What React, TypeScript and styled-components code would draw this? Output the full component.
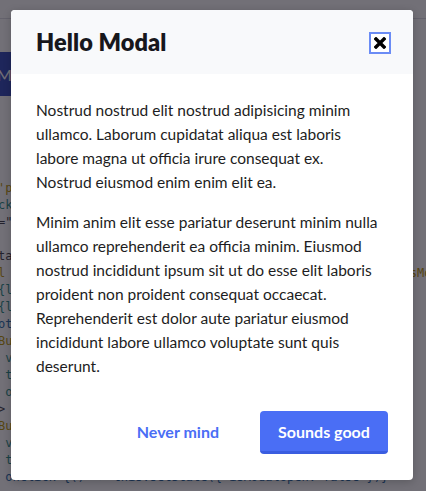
import React from 'react'
import styled, { createGlobalStyle } from 'styled-components'

const GlobalStyle = createGlobalStyle`
	html, body {
		margin: 0;
		padding: 0;
		background: #ffffff;
	}
	body {
		font-family: Lato, 'Noto Sans', sans-serif;
	}
`

const Page = styled.div`
	width: 426px;
	height: 491px;
	overflow: hidden;
	position: relative;
	background: #fff;
`

const TopBar = styled.div`
	height: 18px;
	border-bottom: 1px solid #dcdce4;
`

const OpenButton = styled.button`
	display: block;
	margin: 33px 0 0 -66px;
	height: 44px;
	padding: 0 20px;
	border: none;
	border-radius: 4px;
	background: #2f46b8;
	color: #fff;
	font-family: Lato, sans-serif;
	font-size: 16px;
`

const Code = styled.div`
	margin: 84px 0 0 -2px;
	font-family: 'DejaVu Sans Mono', monospace;
	font-size: 12px;
	line-height: 17px;
`

const tones: Record<string, string> = {
	plain: '#3a3a44',
	key: '#b89400',
	attr: '#1f8a82',
	name: '#2369a8',
}

const CodeLine = styled.div<{ tone: string }>`
	white-space: pre;
	height: 17px;
	color: ${p => tones[p.tone]};
`

const codeLines: { text: string; tone: string }[] = [
	{ text: "'primary'", tone: 'key' },
	{ text: 'ck', tone: 'attr' },
	{ text: '=""', tone: 'plain' },
	{ text: '', tone: 'plain' },
	{ text: 'ta', tone: 'plain' },
	{ text: 'l' + ' '.repeat(36) + 'isOpen={this.state.isModalOpen}', tone: 'key' },
	{ text: '{l', tone: 'attr' },
	{ text: '{l', tone: 'attr' },
	{ text: 'ot', tone: 'name' },
	{ text: 'Bu', tone: 'key' },
	{ text: ' v', tone: 'attr' },
	{ text: ' t', tone: 'attr' },
	{ text: ' o', tone: 'attr' },
	{ text: '>', tone: 'plain' },
	{ text: 'Bu', tone: 'key' },
	{ text: ' v', tone: 'attr' },
	{ text: ' t', tone: 'attr' },
	{ text: ' onClick={() => this.setState({ isModalOpen: false })}', tone: 'name' },
]

const Backdrop = styled.div`
	position: absolute;
	inset: 0;
	background: rgba(20, 16, 28, 0.6);
	padding: 10px 13px 0 11px;
`

const Modal = styled.div`
	width: 402px;
	height: 470px;
	background: #ffffff;
	border-radius: 4px;
	box-shadow: 0 2px 8px rgba(0, 0, 0, 0.2);
	display: flex;
	flex-direction: column;
	overflow: hidden;
`

const Header = styled.div`
	height: 64px;
	background: #f8f9fb;
	display: flex;
	align-items: center;
	justify-content: space-between;
	padding: 0 22px 0 25px;
	box-sizing: border-box;
`

const Title = styled.h2`
	margin: 0;
	font-size: 23.5px;
	font-weight: 800;
	color: #17171c;
	letter-spacing: 0.1px;
`

const CloseButton = styled.button`
	width: 22px;
	height: 22px;
	padding: 0;
	border: 2px solid #6b8cf5;
	background: #fff;
	display: flex;
	align-items: center;
	justify-content: center;
	box-sizing: border-box;
	margin-top: 1px;
`

const Body = styled.div`
	padding: 24px 33px 0 25px;
	flex: 1;
`

const Para = styled.p`
	margin: 0 0 16px;
	font-size: 15.5px;
	line-height: 24px;
	color: #1d1d22;
`

const Footer = styled.div`
	display: flex;
	justify-content: flex-end;
	align-items: center;
	gap: 25px;
	padding: 0 25px 26px;
`

const Button = styled.button<{ primary?: boolean }>`
	height: 43px;
	padding: 0 16px;
	border: none;
	border-radius: 4px;
	font-family: Lato, sans-serif;
	font-size: 16px;
	font-weight: 700;
	cursor: pointer;
	background: ${p => (p.primary ? '#4a6ef5' : 'transparent')};
	color: ${p => (p.primary ? '#ffffff' : '#4a6ef5')};
	border-bottom: 3px solid ${p => (p.primary ? '#3a5de0' : 'transparent')};
	width: ${p => (p.primary ? '128px' : 'auto')};
`

function App() {
	return (
		<Page>
			<GlobalStyle />
			<TopBar />
			<OpenButton>Open Modal</OpenButton>
			<Code>
				{codeLines.map((line, i) => (
					<CodeLine key={i} tone={line.tone}>
						{line.text}
					</CodeLine>
				))}
			</Code>
			<Backdrop>
				<Modal>
					<Header>
						<Title>Hello Modal</Title>
						<CloseButton aria-label='Close'>
							<svg width='12' height='12' viewBox='0 0 12 12'>
								<path d='M2 2 L10 10 M10 2 L2 10' stroke='#000' strokeWidth='3.4' strokeLinecap='square' />
							</svg>
						</CloseButton>
					</Header>
					<Body>
						<Para>
							Nostrud nostrud elit nostrud adipisicing minim ullamco. Laborum cupidatat aliqua est laboris labore magna ut officia irure consequat ex. Nostrud eiusmod enim enim elit ea.
						</Para>
						<Para>
							Minim anim elit esse pariatur deserunt minim nulla ullamco reprehenderit ea officia minim. Eiusmod nostrud incididunt ipsum sit ut do esse elit laboris proident non proident consequat occaecat. Reprehenderit est dolor aute pariatur eiusmod incididunt labore ullamco voluptate sunt quis deserunt.
						</Para>
					</Body>
					<Footer>
						<Button>Never mind</Button>
						<Button primary>Sounds good</Button>
					</Footer>
				</Modal>
			</Backdrop>
		</Page>
	)
}

export default App
